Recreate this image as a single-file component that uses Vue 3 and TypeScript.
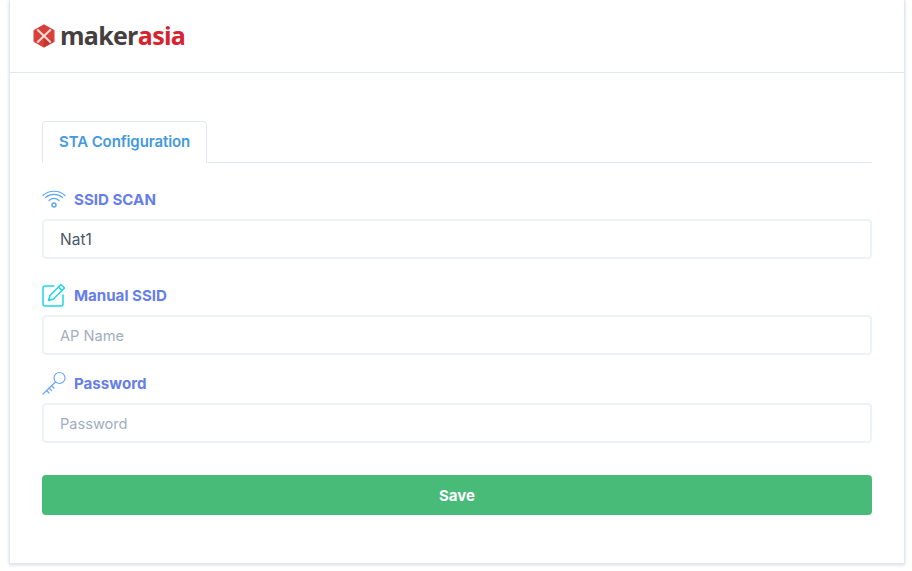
<template>
  <div class="page">
    <div class="card">
      <header class="card-head">
        <svg class="logo-mark" width="22" height="24" viewBox="0 0 22 24">
          <path d="M11 1.2 L20.8 6.6 V17.4 L11 22.8 L1.2 17.4 V6.6 Z" fill="#d8403a" stroke="#d8403a" stroke-width="1.4" stroke-linejoin="round" />
          <path d="M11 12 L20.8 17.4 L11 22.8 Z" fill="#c8322f" />
          <path d="M4.2 5.5 L17.8 18.5 M17.8 5.5 L4.2 18.5" stroke="#f8dcd6" stroke-width="2" />
        </svg>
        <span class="logo-text">maker<em>asia</em></span>
      </header>

      <div class="card-body">
        <div class="tabs">
          <div class="tab">STA Configuration</div>
        </div>

        <form class="form" @submit.prevent>
          <div class="field first">
            <label class="label">
              <svg width="24" height="20" viewBox="0 0 24 20" fill="none" stroke="#5ea6f2" stroke-width="1.2" stroke-linecap="round">
                <path d="M1 6.5 C7 0.8 17 0.8 23 6.5" />
                <path d="M3.5 8.5 C8.5 4.3 15.5 4.3 20.5 8.5" />
                <path d="M7 11.5 C10 9 14 9 17 11.5" />
                <circle cx="12" cy="16" r="2" stroke-width="1.5" />
              </svg>
              <span>SSID SCAN</span>
            </label>
            <input class="input" type="text" v-model="ssid" />
          </div>

          <div class="field manual">
            <label class="label">
              <svg width="24" height="24" viewBox="0 0 24 24" fill="none" stroke="#1fd6ea" stroke-width="1.5" stroke-linejoin="round" stroke-linecap="round">
                <path d="M12 3 H3 Q1 3 1 5 V21 Q1 23 3 23 H19 Q21 23 21 21 V12" />
                <path d="M19 1.5 L22.5 5 L11.5 16 L6.5 17.5 L8 12.5 Z" />
                <path d="M16.5 4 L20 7.5" />
              </svg>
              <span>Manual SSID</span>
            </label>
            <input class="input" type="text" placeholder="AP Name" />
          </div>

          <div class="field pass">
            <label class="label">
              <svg width="24" height="24" viewBox="0 0 24 24" fill="none" stroke="#6aa8f5" stroke-width="1.2" stroke-linecap="round">
                <circle cx="17.5" cy="7" r="5.5" />
                <path d="M13.5 11 L1 23" />
                <path d="M4.5 19.5 L7 22 M7 17 L9.5 19.5 M9.5 14.8 L12 17.2" />
              </svg>
              <span>Password</span>
            </label>
            <input class="input" type="password" placeholder="Password" />
          </div>

          <button class="save" type="submit">Save</button>
        </form>
      </div>
    </div>
  </div>
</template>

<script setup lang="ts">
import { ref } from "vue";

const ssid = ref<string>("Nat1");
</script>

<style>
html,
body {
  margin: 0;
  background: #fff;
}
</style>

<style scoped>
.page {
  width: 912px;
  height: 571px;
  padding: 0 7px 7px 9px;
  box-sizing: border-box;
  font-family: Inter, "Open Sans", sans-serif;
  overflow: hidden;
}
.card {
  height: 564px;
  box-sizing: border-box;
  background: #fff;
  border: 1px solid #e2e8f0;
  border-top: none;
  box-shadow: 0 1px 3px rgba(100, 110, 150, 0.25);
  display: flex;
  flex-direction: column;
}
.card-head {
  height: 73px;
  box-sizing: border-box;
  border-bottom: 1px solid #e2e8f0;
  display: flex;
  align-items: center;
  padding: 0 0 0 23px;
  gap: 5px;
}
.logo-text {
  font-family: "Open Sans", sans-serif;
  font-weight: 700;
  font-size: 25px;
  letter-spacing: -0.7px;
  color: #45403f;
  line-height: 1;
  margin-top: -1px;
}
.logo-text em {
  font-style: normal;
  color: #d8232f;
}
.card-body {
  padding: 48px 32px 0;
}
.tabs {
  border-bottom: 1px solid #e2e8f0;
  display: flex;
}
.tab {
  height: 42px;
  box-sizing: border-box;
  margin-bottom: -1px;
  padding: 0 16px;
  border: 1px solid #e2e8f0;
  border-bottom: 1px solid #fff;
  border-radius: 4px 4px 0 0;
  background: #fff;
  color: #4299e1;
  font-weight: 600;
  font-size: 15px;
  line-height: 40px;
  letter-spacing: -0.1px;
}
.form {
  display: flex;
  flex-direction: column;
}
.field.first {
  margin-top: 24px;
}
.field.manual {
  margin-top: 24px;
}
.field.pass {
  margin-top: 16px;
}
.label {
  display: flex;
  align-items: center;
  gap: 8px;
  height: 24px;
  margin-bottom: 8px;
  color: #667eea;
  font-weight: 700;
  font-size: 15.1px;
}
.label svg {
  flex: none;
}
.input {
  display: block;
  width: 100%;
  height: 40px;
  box-sizing: border-box;
  padding: 0 16px;
  border: 2px solid #edf2f7;
  border-radius: 4px;
  background: #fff;
  color: #4a5568;
  font-family: inherit;
  font-size: 15.5px;
  outline: none;
}
.input::placeholder {
  color: #a0aec0;
  opacity: 1;
  font-size: 14.6px;
}
.save {
  margin-top: 32px;
  height: 40px;
  border: none;
  border-radius: 4px;
  background: #48bb78;
  color: #fff;
  font-family: inherit;
  font-weight: 700;
  font-size: 15px;
}
</style>
